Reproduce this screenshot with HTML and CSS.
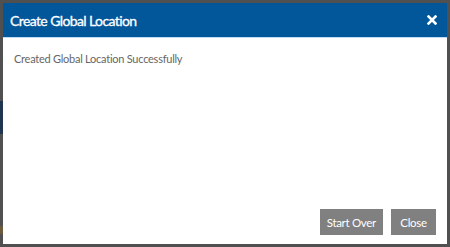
FILE: index.html
```html
<!DOCTYPE html>
<html>
    <head>
        <link rel="stylesheet" href="styles.css">
    </head>
    <body>
        <div class="backdrop">
            <div class="side-stripe side-blue"></div>
            <div class="side-stripe side-orange"></div>
        </div>
        <div class="modal">
            <div class="modal-header">
                <h4 class="modal-title">Create Global Location</h4>
                <button class="modal-close" type="button">
                    <svg width="10" height="10" viewBox="0 0 10 10">
                        <path d="M1.5 1.5 L8.5 8.5 M8.5 1.5 L1.5 8.5" stroke="#fff" stroke-width="2.6" stroke-linecap="square"/>
                    </svg>
                </button>
            </div>
            <div class="modal-body">
                <p>Created Global Location Successfully</p>
            </div>
            <div class="modal-footer">
                <button class="btn" type="button">Start Over</button>
                <button class="btn" type="button">Close</button>
            </div>
        </div>
    </body>
</html>
```

FILE: styles.css
```css
html, body {
    margin: 0;
    height: 100%;
}
body {
    font-family: Lato, "Open Sans", sans-serif;
    background-color: #505050;
    overflow: hidden;
}
.backdrop {
    position: absolute;
    left: 0;
    top: 0;
    width: 3px;
    height: 100%;
}
.side-stripe {
    position: absolute;
    left: 0;
    width: 3px;
}
.side-blue {
    top: 101px;
    height: 33px;
    background-color: #1f3550;
}
.side-orange {
    top: 226px;
    height: 8px;
    background-color: #6b5a3c;
}
.modal {
    position: absolute;
    left: 3px;
    top: 3px;
    width: 444px;
    height: 241px;
    background-color: #fff;
    display: flex;
    flex-direction: column;
}
.modal-header {
    background-color: #02569a;
    height: 34px;
    border-bottom: 1px solid #c4daf0;
    display: flex;
    align-items: center;
    justify-content: space-between;
    padding: 0 10px 0 7px;
}
.modal-title {
    margin: 0;
    color: #fff;
    font-size: 14px;
    font-weight: 400;
    letter-spacing: -0.6px;
    -webkit-text-stroke: 0.3px #fff;
}
.modal-close {
    background: none;
    border: 0;
    padding: 0;
    display: flex;
    cursor: pointer;
}
.modal-body {
    flex: 1;
    padding: 0 11px;
}
.modal-body p {
    margin: 14px 0 0 0;
    font-size: 11px;
    letter-spacing: -0.25px;
    color: #666;
}
.modal-footer {
    display: flex;
    justify-content: flex-end;
    gap: 8px;
    padding: 0 11px 9px 0;
}
.btn {
    font-family: Lato, "Open Sans", sans-serif;
    font-size: 11.5px;
    letter-spacing: -0.3px;
    color: #fff;
    background-color: #808080;
    border: 0;
    height: 26px;
    min-width: 45px;
    padding: 0 7px;
}
```
